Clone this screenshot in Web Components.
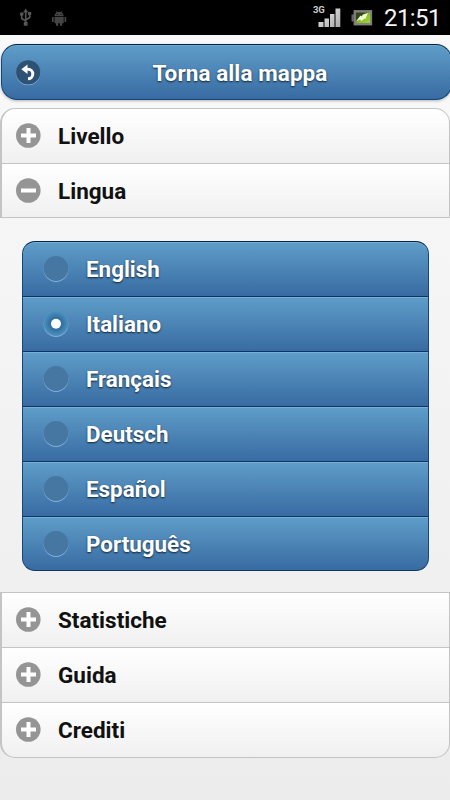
<!DOCTYPE html>
<html lang="it">
<head>
<meta charset="utf-8">
<title>Impostazioni</title>
<style>
html,body{margin:0;height:100%}
body{font-family:Roboto,"Liberation Sans",sans-serif;overflow:hidden}
</style>
</head>
<body>
<settings-page></settings-page>
<script>
const define=(name,html)=>customElements.define(name,class extends HTMLElement{
  constructor(){
    super();
    const t=document.createElement('template');
    t.innerHTML=html;
    this.attachShadow({mode:'open'}).append(t.content.cloneNode(true));
  }
});

define('status-bar',`
<style>
:host{display:flex;align-items:center;height:35px;background:#000;color:#f4f4f4;box-sizing:border-box;padding-right:9px}
svg{display:block;flex:none}
.clock{font-size:24px;line-height:35px;margin-left:11px;padding-top:2px;letter-spacing:-.6px;width:57px;white-space:nowrap}
.net{position:relative;margin-left:auto}
.net span{position:absolute;left:0;top:4px;font-size:9.5px;line-height:11px;font-weight:700;color:#ccc;letter-spacing:-.2px}
</style>
<svg width="80" height="35" viewBox="0 0 80 35">
  <g fill="none" stroke="#565656" stroke-width="1.6"><path d="M25.7 11V24M21.7 14v4.500l4 2.500M29.700 13v4.500l-4 2.500"/></g>
  <path d="M25.700 8.500l2.600 4h-5.200zM20 12.500h3.400v3H20zM28 12h3.200v3H28zM23.800 22h3.800v3.800h-3.800z" fill="#565656"/>
  <g fill="#454545"><path d="M54.500 16.200a4.600 4.400 0 0 1 9.200 0zM54.500 17h9.200v6.300h-1.500v2.400h-2.200v-2.400h-1.800v2.400H56v-2.400h-1.500zM52 17h1.700v5H52zM64.500 17h1.700v5h-1.700z"/><path d="M56 11l1.300 2M62.200 11l-1.300 2" stroke="#454545" stroke-width=".8"/></g>
  <circle cx="57.300" cy="14.300" r=".6"/><circle cx="61" cy="14.300" r=".6"/>
</svg>
<div class="net"><span>3G</span>
<svg width="29" height="35" viewBox="0 0 29 35"><defs><linearGradient id="b" x2="1" y2="1"><stop stop-color="#eee"/><stop offset="1" stop-color="#aaa"/></linearGradient></defs><g fill="url(#b)"><path d="M5.500 22h5v5h-5zM11.500 18.500H16V27h-4.500zM17 14h4.500v13H17zM22.500 8.500h4.800V27h-4.800z"/></g></svg></div>
<svg width="22" height="35" viewBox="0 0 22 35" style="margin-left:9px"><defs><linearGradient id="g" x2="1" y2="1"><stop offset=".35" stop-color="#34451d"/><stop offset=".5" stop-color="#82bd24"/><stop offset="1" stop-color="#a5dd37"/></linearGradient></defs>
<path d="M2.500 10H21.200V25.500H2.500V21.500H.5v-7h2z" fill="#666"/><path d="M4 11.500H20V24H4z" fill="url(#g)" stroke="#857f7f" stroke-width="1.800"/><path d="M17 13l-5 1.500-1.500 2-1-1-4.500 6 4-2 1.500 1.500 3-2.500 1 .5z" fill="#efffcb"/></svg>
<div class="clock">21:51</div>`);

define('back-button',`
<style>
:host{display:block;padding:9px 0 4px 1px;margin-bottom:-4px;overflow:hidden}
button{all:unset;box-sizing:border-box;display:flex;align-items:center;width:451px;height:56px;padding:0 13px 0 14px;border:1px solid #124778;border-top-color:#04243f;border-radius:16px;background:linear-gradient(#5f9dc9,#386ba2);box-shadow:inset 0 1px 0 #6fa8d0,0 1px 3px rgba(0,0,0,.28);color:#fff;text-shadow:0 1px 2px #123}
.t{flex:1;text-align:center;font-size:22.5px;line-height:30px;font-weight:700;padding:1px 0 0;letter-spacing:.08px}
svg{display:block;margin-top:2px}
</style>
<button><svg width="26" height="28" viewBox="0 0 26 28"><circle cx="12.200" cy="14.200" r="12.100" fill="#86b6df"/><circle cx="12.200" cy="13.400" r="12.100" fill="#2e5274"/><path d="M10 10.200h2a4.800 4.800 0 0 1 0 9.600" fill="none" stroke="#fff" stroke-width="3"/><path d="M5.300 10.200l6.200-4.700v9.400z" fill="#fff"/></svg><span class="t"><slot></slot></span></button>`);

define('section-header',`
<style>
:host{display:flex;align-items:center;box-sizing:border-box;height:55px;padding-left:14px;border:1px solid #c4c4c4;border-width:0 1px 1px 2px;background:linear-gradient(#fff,#f0f0f0);color:#111;font-size:22.5px;font-weight:700;line-height:30px}
:host([first]){border-top-width:1px;height:56px}
:host([open]){height:54px}
:host([top]){border-radius:15px 15px 0 0}
:host([bottom]){border-radius:0 0 15px 15px}
svg{display:block;flex:none;margin-bottom:1px}
span{margin-left:17px;padding-bottom:1px}
:host([open]) span{padding-bottom:0}
:host([open]) .v{display:none}
</style>
<svg width="25" height="25" viewBox="0 0 25 25"><circle cx="12.300" cy="12.500" r="12.300" fill="#959595"/><path d="M5 12.500h15" stroke="#fff" stroke-width="4"/><path class="v" d="M12.500 5v15" stroke="#fff" stroke-width="4"/></svg><span><slot></slot></span>`);

define('language-option',`
<style>
:host{display:flex;align-items:center;box-sizing:border-box;height:55px;padding-left:20px;border:1px solid #124778;border-width:0 1px 1px;border-bottom-color:#0c3764;background:linear-gradient(#5f9dc9,#386ba2);box-shadow:inset 0 1px 0 #78afd3;color:#fff;font-size:22.400px;font-weight:700;line-height:30px;text-shadow:0 1px 2px #123}
:host([first]){height:56px;border-top:1px solid #04243f;border-radius:13px 13px 0 0}
:host([last]){height:54px;border-radius:0 0 13px 13px}
svg{display:block;flex:none}
span{margin-left:16px}
.on,:host([checked]) .off{display:none}
:host([checked]) .on{display:inline}
</style>
<svg width="27" height="28" viewBox="0 0 27 28"><circle cx="13" cy="14.600" r="12.400" fill="#82b1dc"/><circle class="off" cx="13" cy="13.500" r="12.400" fill="#4677a3"/>
<g class="on"><defs><radialGradient id="r"><stop offset=".35" stop-color="#2a679a"/><stop offset="1" stop-color="#4d92c0"/></radialGradient></defs><circle cx="13" cy="13.500" r="12.400" fill="url(#r)"/><circle cx="13" cy="13.800" r="5" fill="#fff"/></g></svg><span><slot></slot></span>`);

define('settings-page',`
<style>
:host{display:block;width:450px;height:800px;background:linear-gradient(#f9f9f9 35px,#ececec)}
.list{margin-top:8px}
.panel{padding:23px 21px 21px 22px}
</style>
<status-bar></status-bar>
<back-button>Torna alla mappa</back-button>
<div class="list">
<section-header first top>Livello</section-header>
<section-header open>Lingua</section-header>
<div class="panel">
<language-option first>English</language-option>
<language-option checked>Italiano</language-option>
<language-option>Français</language-option>
<language-option>Deutsch</language-option>
<language-option>Español</language-option>
<language-option last>Português</language-option>
</div>
<section-header first>Statistiche</section-header>
<section-header>Guida</section-header>
<section-header bottom>Crediti</section-header>
</div>`);
</script>
</body>
</html>
